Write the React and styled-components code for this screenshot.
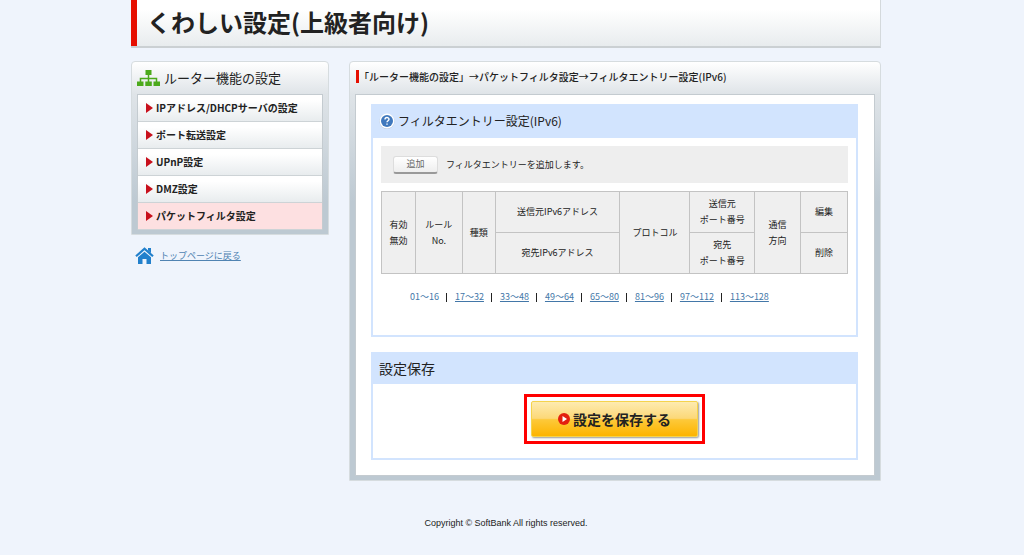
import styled, { createGlobalStyle } from 'styled-components';

const GlobalStyle = createGlobalStyle`
* {
	box-sizing: border-box;
}

body {
	margin: 0;
	background-color: #eff4fc;
	color: #222;
	font-family: 'Noto Sans CJK JP', 'Liberation Sans', sans-serif;
	font-size: 9px;
	line-height: 16px;
}

h1, h2, h3, p, ul, ol {
	margin: 0;
	padding: 0;
	font-weight: 400;
}

ul, ol {
	list-style: none;
}
`;

const Page = styled.div`
	max-width: 762px;
	margin: 0 auto;
	padding-right: 12px;
`;

const PageHeader = styled.header`
	border-right: 1px solid #d4d9dc;
	border-bottom: 2px solid #cbd0d3;
	background: linear-gradient(#fff 20%, #e8ecee);

	h1 {
		border-left: 6px solid #e60f00;
		padding: 5px 10px 7px;
		font-size: 24px;
		font-weight: 700;
		line-height: 34px;
	}
`;

const Columns = styled.div`
	display: flex;
	align-items: flex-start;
	gap: 20px;
	margin-top: 13px;
`;

const SideColumn = styled.div`
	flex: 0 0 198px;
`;

const Panel = styled.section`
	border: 1px solid #d6dcdf;
	border-radius: 4px 4px 0 0;
	background: linear-gradient(#fff, #dfe4e8 32px, #bdc9d2 140px);
	padding: 0 5px 4px;
`;

const MainPanel = styled(Panel)`
	flex: 1;
	min-width: 0;
`;

const PanelTitle = styled.h2`
	display: flex;
	align-items: center;
	gap: 4px;
	height: 32px;
	font-size: 13px;
`;

const Breadcrumb = styled.p`
	display: flex;
	align-items: center;
	height: 32px;
	padding: 0 1px 4px;
	font-size: 10px;
	font-weight: 500;

	span {
		border-left: 3px solid #e60f00;
		line-height: 13px;
	}
`;

const Menu = styled.ul`
	border: 1px solid #c4cbd0;
	border-bottom: 0;
`;

const MenuLink = styled.a`
	display: flex;
	align-items: center;
	gap: 3px;
	height: 27px;
	padding-left: 7px;
	border-bottom: 1px solid #cdd3d6;
	background: ${({ $current }) =>
		$current ? '#fde0e1' : 'linear-gradient(#fff 20%, #e8ecee)'};
	color: #222;
	font-size: 10px;
	font-weight: 700;
	text-decoration: none;
`;

const BackLink = styled.a`
	display: flex;
	align-items: center;
	gap: 6px;
	padding: 12px 4px;
	color: #5083b2;
`;

const PanelBody = styled.div`
	border: 1px solid #c4cbd0;
	background-color: #fff;
	padding: 9px 16px 15px 15px;
`;

const Section = styled.section`
	border: 2px solid #d2e4fe;
	border-top: 0;

	& + & {
		margin-top: 15px;
	}
`;

const SectionTitle = styled.h3`
	display: flex;
	align-items: center;
	gap: 3px;
	height: ${({ $tall }) => ($tall ? '34px' : '32px')};
	padding: 0 6px;
	background-color: #d2e4fe;
	font-size: ${({ $tall }) => ($tall ? '12px' : '14px')};
`;

const SectionBody = styled.div`
	padding: 8px 8px 30px;
`;

const AddBar = styled.div`
	display: flex;
	align-items: center;
	gap: 8px;
	height: 37px;
	padding: 0 12px;
	background-color: #eee;
`;

const AddButton = styled.button`
	width: 45px;
	height: 18px;
	padding: 0;
	border: 1px solid #ddd;
	border-bottom: 2px solid #999;
	border-radius: 3px;
	background: linear-gradient(#fff, #eee);
	color: #666;
	font: inherit;
	line-height: 14px;
`;

const FilterTable = styled.table`
	width: 100%;
	margin-top: 8px;
	border-collapse: collapse;
	table-layout: fixed;

	th {
		height: 41px;
		padding: 0;
		border: 1px solid #c3c3c3;
		background-color: #efefef;
		font-weight: 400;
	}
`;

const Pager = styled.ol`
	display: flex;
	margin-top: 15px;
	padding-left: 29px;
	color: #4377a8;

	li + li::before {
		content: '';
		display: inline-block;
		height: 9px;
		margin: 0 8px 0 7px;
		border-left: 1px solid #222;
		vertical-align: middle;
	}

	a {
		color: #4377a8;
	}
`;

const SaveArea = styled.div`
	display: flex;
	justify-content: center;
	padding: 10px 0 14px;
`;

const SaveFrame = styled.div`
	border: 3px solid #ff0000;
	padding: 4px;
`;

const SaveButton = styled.button`
	display: flex;
	align-items: center;
	justify-content: center;
	gap: 3px;
	width: 167px;
	height: 36px;
	padding: 0;
	border: 1px solid #f5d34c;
	border-radius: 2px;
	background: linear-gradient(#fdebb0, #fcd878 48%, #fdc93a 52%, #fdb400);
	box-shadow: 1px 1px 2px #999;
	color: #222;
	font: inherit;
	font-size: 14px;
	font-weight: 700;
`;

const Footer = styled.footer`
	padding: 34px 0;
	font-family: 'Liberation Sans', sans-serif;
	text-align: center;
`;

const SitemapIcon = () => (
	<svg width='23' height='18' viewBox='0 0 23 18' aria-hidden='true'>
		<path
			d='M11.5 5v9M3.5 13V9.5h16V13'
			fill='none'
			stroke='#4caa1c'
			strokeWidth='1.5'
		/>
		<path
			d='M8.5 1h6v5h-6zM0 12.500h6.500v4.500H0zM8.300 12.500h6.500v4.500H8.300zM16.500 12.500H23v4.500h-6.500z'
			fill='#4caa1c'
		/>
	</svg>
);

const ArrowIcon = () => (
	<svg width='8' height='10' viewBox='0 0 8 10' aria-hidden='true'>
		<path d='M1 0l7 5-7 5z' fill='#c8101c' />
	</svg>
);

const HomeIcon = () => (
	<svg width='19' height='17' viewBox='0 0 19 17' aria-hidden='true'>
		<path
			d='M1 9.300l8.500-7.500L18 9.300'
			fill='none'
			stroke='#2280cc'
			strokeWidth='2.200'
		/>
		<path d='M13 1h3v5.200l-3-2.700z' fill='#2280cc' />
		<path d='M3 10.300l6.500-5.600L16 10.300V17h-4.500v-5h-4v5H3z' fill='#2280cc' />
	</svg>
);

const HelpIcon = () => (
	<svg width='16' height='16' viewBox='0 0 16 16' aria-hidden='true'>
		<circle cx='8' cy='8.500' r='7.500' fill='#b5c4d8' />
		<circle cx='8' cy='8' r='7.400' fill='#fff' />
		<circle cx='8' cy='8' r='6' fill='#3f78bd' />
		<path
			d='M6 6.500c0-2.600 4-2.600 4-.2 0 1.400-2 1.400-2 3M8 10.500v1.300'
			fill='none'
			stroke='#fff'
			strokeWidth='1.400'
		/>
	</svg>
);

const PlayIcon = () => (
	<svg width='12' height='12' viewBox='0 0 12 12' aria-hidden='true'>
		<circle cx='6' cy='6' r='6' fill='#e3200f' />
		<path d='M4.500 3l4.500 3-4.500 3z' fill='#fff' />
	</svg>
);

const menuItems = [
	'IPアドレス/DHCPサーバの設定',
	'ポート転送設定',
	'UPnP設定',
	'DMZ設定',
	'パケットフィルタ設定',
];

const ranges = [
	'01～16',
	'17～32',
	'33～48',
	'49～64',
	'65～80',
	'81～96',
	'97～112',
	'113～128',
];

const columnWidths = [34, 47, 33, 125, 70, 65, 46, 47];
const tableUnits = columnWidths.reduce((sum, width) => sum + width, 0);

const App = () => (
	<>
		<GlobalStyle />
		<Page>
			<PageHeader>
				<h1>くわしい設定(上級者向け)</h1>
			</PageHeader>
			<Columns>
				<SideColumn>
					<Panel as='nav'>
						<PanelTitle>
							<SitemapIcon />
							ルーター機能の設定
						</PanelTitle>
						<Menu>
							{menuItems.map((item, index) => (
								<li key={item}>
									<MenuLink
										href='#'
										$current={index === menuItems.length - 1}
									>
										<ArrowIcon />
										{item}
									</MenuLink>
								</li>
							))}
						</Menu>
					</Panel>
					<BackLink href='#'>
						<HomeIcon />
						トップページに戻る
					</BackLink>
				</SideColumn>

				<MainPanel as='main'>
					<Breadcrumb>
						<span>
							「ルーター機能の設定」→パケットフィルタ設定→フィルタエントリー設定(IPv6)
						</span>
					</Breadcrumb>
					<PanelBody>
						<Section>
							<SectionTitle $tall>
								<HelpIcon />
								フィルタエントリー設定(IPv6)
							</SectionTitle>
							<SectionBody>
								<AddBar>
									<AddButton type='button'>追加</AddButton>
									<p>フィルタエントリーを追加します。</p>
								</AddBar>
								<FilterTable>
									<colgroup>
										{columnWidths.map((width, index) => (
											<col
												key={index}
												style={{ width: `${(width / tableUnits) * 100}%` }}
											/>
										))}
									</colgroup>
									<thead>
										<tr>
											<th rowSpan={2}>有効<br />無効</th>
											<th rowSpan={2}>ルール<br />No.</th>
											<th rowSpan={2}>種類</th>
											<th>送信元IPv6アドレス</th>
											<th rowSpan={2}>プロトコル</th>
											<th>送信元<br />ポート番号</th>
											<th rowSpan={2}>通信<br />方向</th>
											<th>編集</th>
										</tr>
										<tr>
											<th>宛先IPv6アドレス</th>
											<th>宛先<br />ポート番号</th>
											<th>削除</th>
										</tr>
									</thead>
								</FilterTable>
								<Pager>
									{ranges.map((range, index) => (
										<li key={range}>
											{index === 0 ? range : <a href='#'>{range}</a>}
										</li>
									))}
								</Pager>
							</SectionBody>
						</Section>

						<Section>
							<SectionTitle>設定保存</SectionTitle>
							<SaveArea>
								<SaveFrame>
									<SaveButton type='button'>
										<PlayIcon />
										設定を保存する
									</SaveButton>
								</SaveFrame>
							</SaveArea>
						</Section>
					</PanelBody>
				</MainPanel>
			</Columns>
			<Footer>Copyright © SoftBank All rights reserved.</Footer>
		</Page>
	</>
);

export default App;
